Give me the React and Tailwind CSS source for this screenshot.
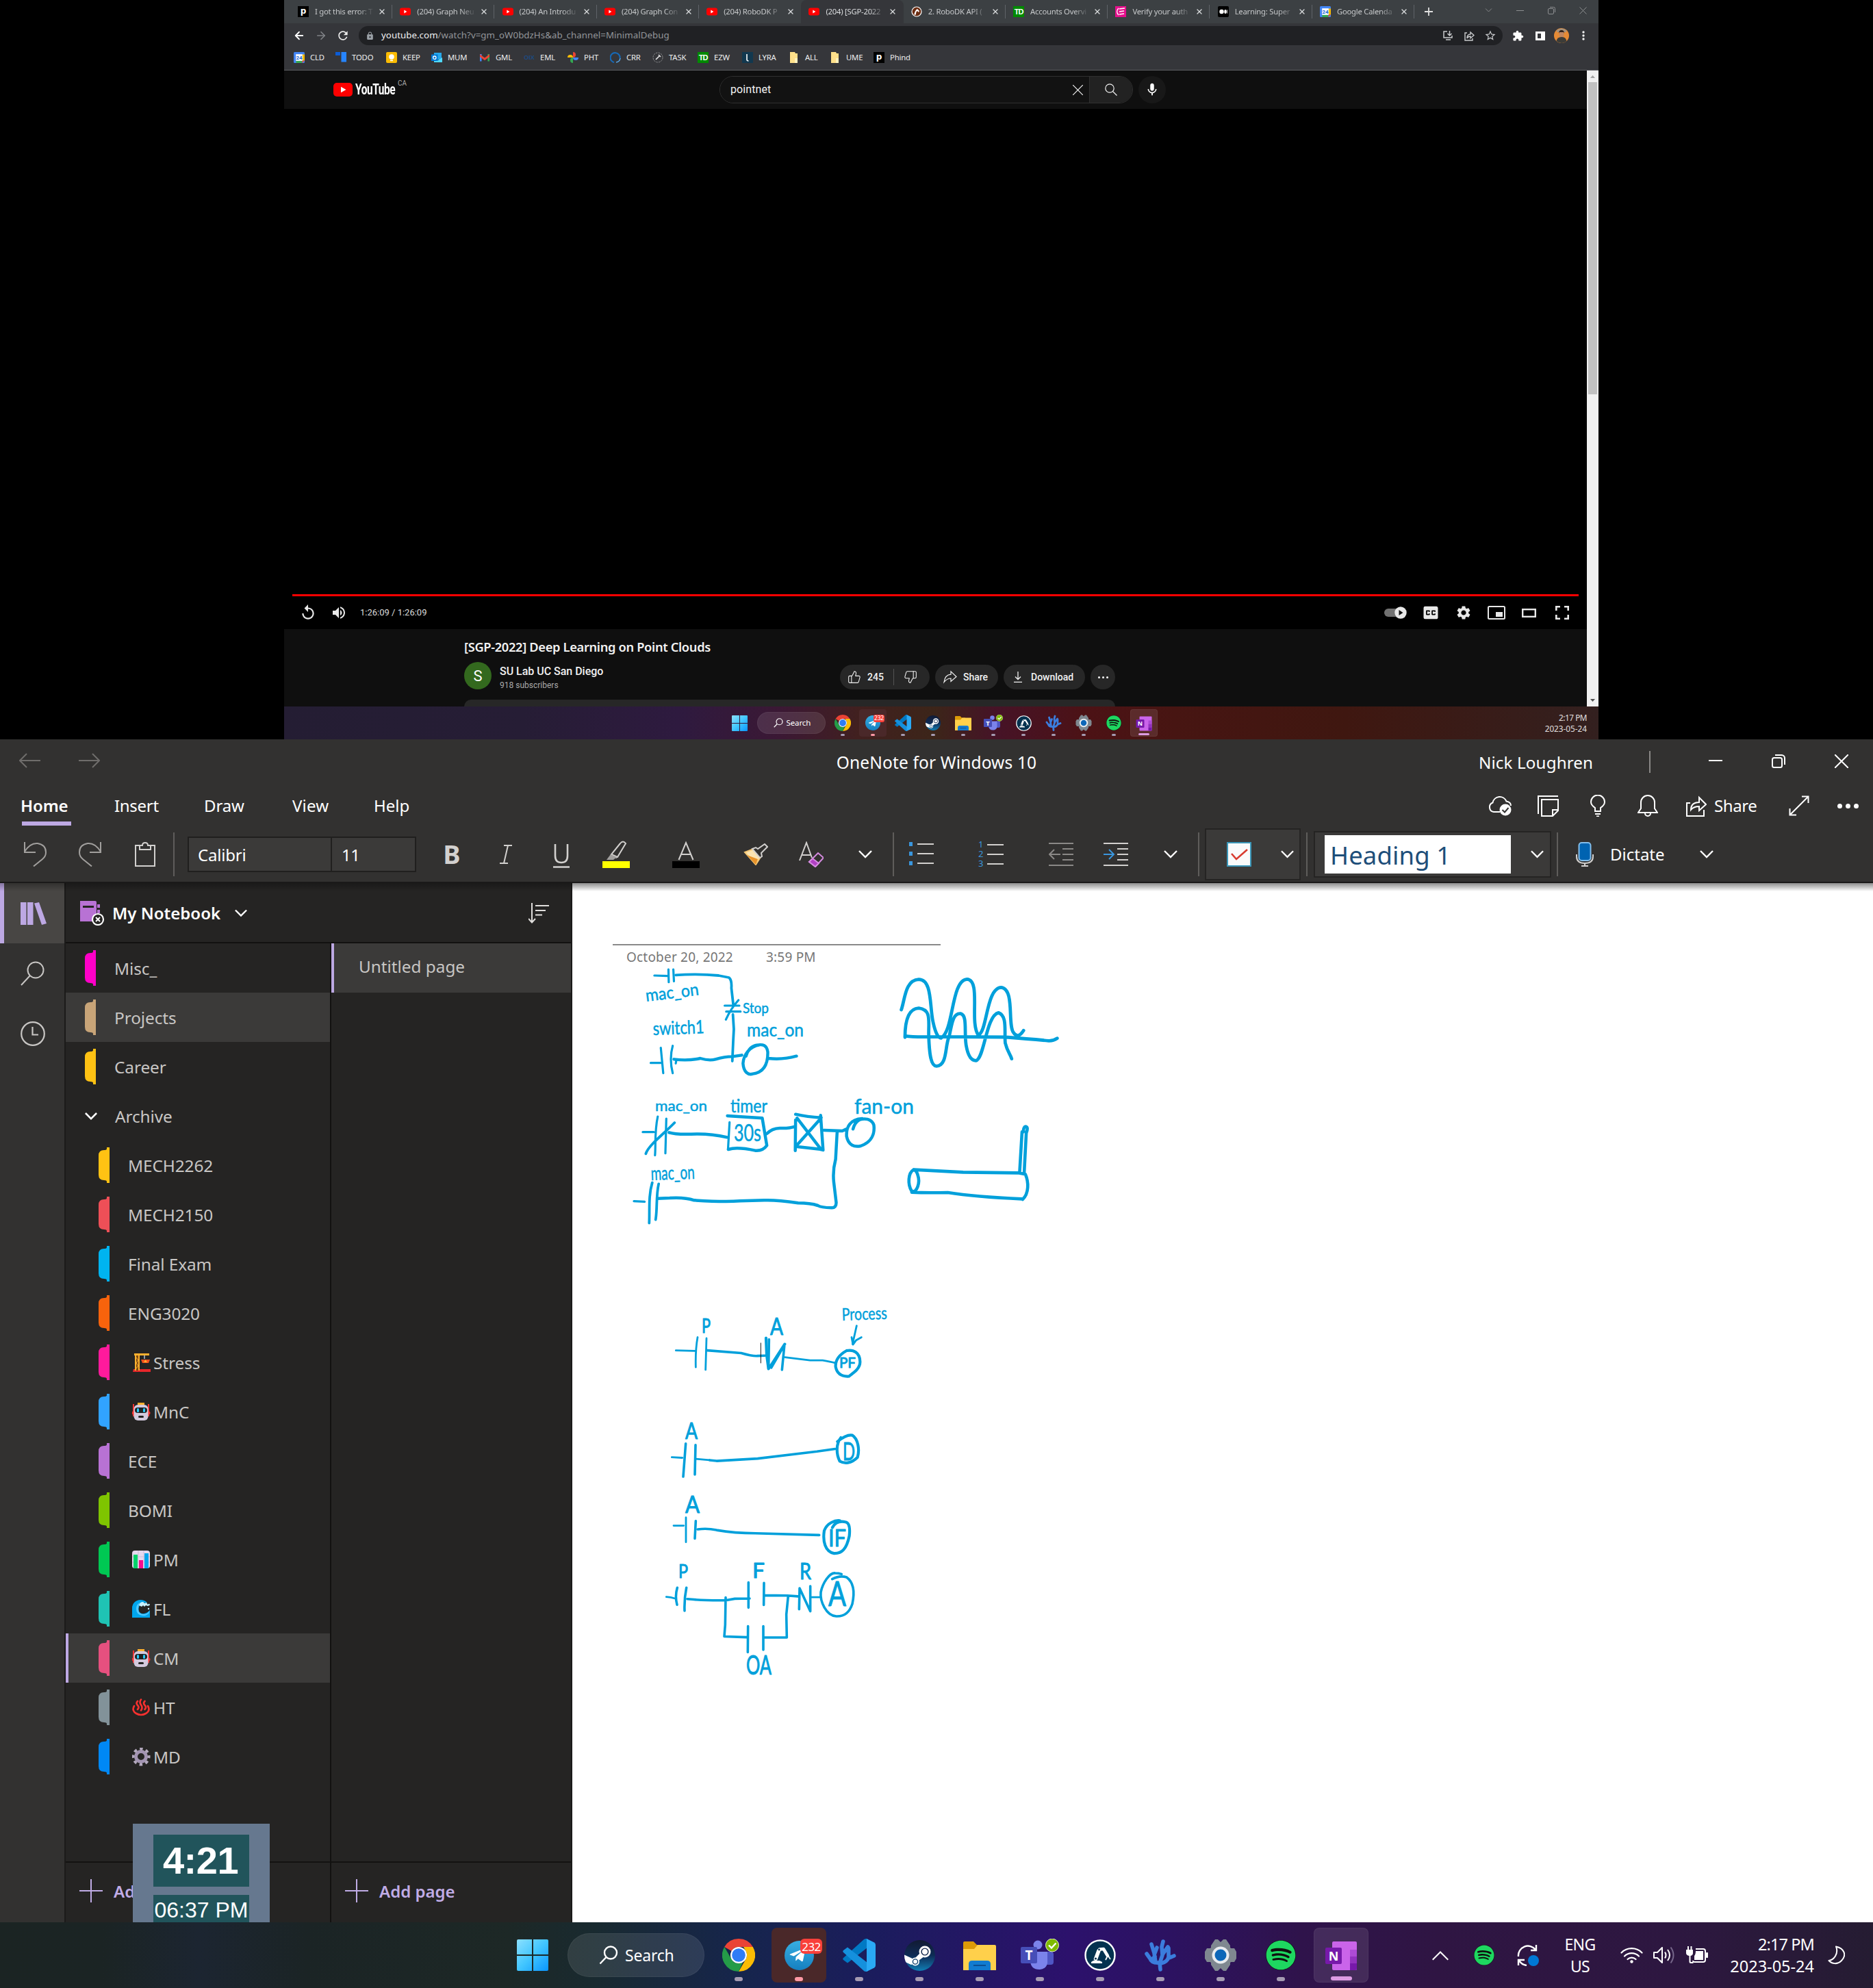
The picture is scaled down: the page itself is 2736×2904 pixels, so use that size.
import React from "react";
import { FaSpotify, FaTelegramPlane } from "react-icons/fa";
import { MdReplay, MdVolumeUp, MdSettings, MdClosedCaption, MdExtension, MdLock, MdMic, MdRefresh, MdStarBorder } from "react-icons/md";
import { ArrowLeft, ArrowRight, ThumbsUp, ThumbsDown, X } from "lucide-react";

/* ---------- shared pieces ---------- */

function Chevron({ className = "", up = false, w = 2 }) {
  return (
    <svg className={className} viewBox="0 0 20 12" fill="none" stroke="currentColor" strokeWidth={w}>
      <path d={up ? "M1 11 10 2l9 9" : "M1 1l9 9 9-9"} />
    </svg>
  );
}

function Favicon({ kind }) {
  const c = "block size-4 shrink-0";
  switch (kind) {
    case "phind":
      return <span className={c + " bg-black text-center font-['DejaVu_Sans'] text-[12px] font-bold leading-[14px] text-white"}>p</span>;
    case "yt":
      return (
        <svg className={c} viewBox="0 0 16 16"><rect x="0" y="2.5" width="16" height="11" rx="3" fill="#f00" /><path d="M6.3 5.6v4.8L10.4 8z" fill="#fff" /></svg>
      );
    case "robo":
      return (
        <svg className={c} viewBox="0 0 16 16"><circle cx="8" cy="8" r="7" fill="#6b2d12" stroke="#fff" strokeWidth="1.2" /><path d="M4 12.500c1-1 1-6 5-8.500l3 3-1 2-2-2c-2 1-2 3-2 5.500z" fill="#fff" /></svg>
      );
    case "td":
      return <span className={c + " bg-[#008a00] text-center font-['Liberation_Sans'] text-[11px] font-bold leading-4 tracking-[-1px] text-white"}>TD</span>;
    case "pink":
      return (
        <svg className={c} viewBox="0 0 16 16"><rect width="16" height="16" fill="#e5108c" /><path d="M5 3C2 6 2 10 5 13M6 4l8-1M6 8l7-1M6 12l7-1" stroke="#fff" strokeWidth="1.5" fill="none" /></svg>
      );
    case "medium":
      return (
        <svg className={c} viewBox="0 0 16 16"><rect width="16" height="16" rx="2" fill="#000" /><circle cx="5.5" cy="8" r="3.2" fill="#fff" /><ellipse cx="11" cy="8" rx="1.7" ry="3" fill="#fff" /><rect x="13.3" y="5.4" width=".8" height="5.2" fill="#fff" /></svg>
      );
    case "cal":
      return (
        <svg className={c} viewBox="0 0 16 16"><rect width="16" height="16" rx="1.5" fill="#4285f4" /><path d="M12.5 3.5H16v9h-3.5z" fill="#fbbc04" /><path d="M3.5 12.5h9V16h-9z" fill="#34a853" /><path d="M12.5 12.5H16L12.5 16z" fill="#ea4335" /><rect x="3.2" y="3.2" width="9.6" height="9.6" fill="#fff" /><text x="8" y="11" textAnchor="middle" fontSize="8" fontFamily="Roboto" fontWeight="700" fill="#1967d2">24</text></svg>
      );
    case "todo":
      return (
        <svg className={c} viewBox="0 0 16 16"><path d="M0 0h7v5H0z" fill="#0b5cd6" /><path d="M8.5 0H16v14.5H8.5z" fill="#2684ff" /></svg>
      );
    case "keep":
      return (
        <svg className={c} viewBox="0 0 16 16"><rect x="0" y="0" width="16" height="16" rx="2" fill="#fbbc04" /><circle cx="8" cy="7" r="3.8" fill="#fff" /><rect x="6" y="11.6" width="4" height="1.6" fill="#fff" /></svg>
      );
    case "outlook":
      return (
        <svg className={c} viewBox="0 0 16 16"><rect x="4" y="1" width="11" height="10" fill="#28a8ea" /><path d="M4 8l6 4 6-4v7H4z" fill="#50d9ff" /><rect x="0" y="3.5" width="9.5" height="9.5" fill="#0078d4" /><circle cx="4.8" cy="8.2" r="2.2" fill="none" stroke="#fff" strokeWidth="1.3" /></svg>
      );
    case "gmail":
      return (
        <svg className={c} viewBox="0 0 16 16"><path d="M1 3h2.6v10.5H1z" fill="#4285f4" /><path d="M12.4 3H15v10.5h-2.600z" fill="#34a853" /><path d="M1 3.200 8 8.500l7-5.300V7L8 12.300 1 7z" fill="#ea4335" /></svg>
      );
    case "eml":
      return <span className={c + " text-center font-['Liberation_Sans'] text-[9px] font-bold leading-4 text-[#1d4a80]"}>OIX</span>;
    case "photos":
      return (
        <svg className={c} viewBox="0 0 16 16"><path d="M8 8V0a4 4 0 0 1 0 8z" fill="#ea4335" /><path d="M8 8H0a4 4 0 0 1 8 0z" fill="#fbbc04" /><path d="M8 8v8a4 4 0 0 1 0-8z" fill="#34a853" /><path d="M8 8h8a4 4 0 0 1-8 0z" fill="#4285f4" /></svg>
      );
    case "ring":
      return (
        <svg className={c} viewBox="0 0 16 16" fill="none"><path d="M6 15A7 7 0 1 1 14.500 9" stroke="#1769b5" strokeWidth="2.200" /><path d="M9 15a7 7 0 0 0 6-6" stroke="#57a8e8" strokeWidth="1.500" /></svg>
      );
    case "task":
      return (
        <svg className={c} viewBox="0 0 16 16" fill="none"><circle cx="8" cy="8" r="7" stroke="#8b8c8e" strokeDasharray="2.500 1.200" /><path d="M5 11l5-5M9 4l3 3" stroke="#e8e8e8" strokeWidth="1.600" /></svg>
      );
    case "lyra":
      return (
        <svg className={c} viewBox="0 0 16 16"><rect width="16" height="16" fill="#12384f" /><path d="M7 3v8q0 2 2.500 2" stroke="#fff" strokeWidth="1.600" fill="none" /></svg>
      );
    default:
      return (
        <svg className={c} viewBox="0 0 16 16"><path d="M2 0h7l1 2h3v14H2z" fill="#ffe08a" /><path d="M9 9h4v7H9z" fill="#fff1bd" /></svg>
      );
  }
}

/* ---------- browser ---------- */

const TABS = [
  ["phind", "I got this error: T"],
  ["yt", "(204) Graph Neu"],
  ["yt", "(204) An Introdu"],
  ["yt", "(204) Graph Con"],
  ["yt", "(204) RoboDK P"],
  ["yt", "(204) [SGP-2022"],
  ["robo", "2. RoboDK API ("],
  ["td", "Accounts Overvi"],
  ["pink", "Verify your auth"],
  ["medium", "Learning: Super"],
  ["cal", "Google Calenda"],
];

const MARKS = [
  ["cal", "CLD", "w-[61px]"],
  ["todo", "TODO", "w-[74px]"],
  ["keep", "KEEP", "w-[66px]"],
  ["outlook", "MUM", "w-[70px]"],
  ["gmail", "GML", "w-[65px]"],
  ["eml", "EML", "w-[64px]"],
  ["photos", "PHT", "w-[62px]"],
  ["ring", "CRR", "w-[62px]"],
  ["task", "TASK", "w-[66px]"],
  ["td", "EZW", "w-[65px]"],
  ["lyra", "LYRA", "w-[68px]"],
  ["folder", "ALL", "w-[60px]"],
  ["folder", "UME", "w-[64px]"],
  ["phind", "Phind", "w-[64px]"],
];

function TabStrip() {
  return (
    <div className="flex h-[34px] items-center bg-[#3c4043] pl-[9px] text-[11.3px] text-[#c6c8ca]">
      {TABS.map(([icon, title], i) => (
        <div
          key={i}
          className={
            "flex h-full w-[149.3px] shrink-0 items-center pl-[11px] " + (i === 5 ? "rounded-t-lg bg-[#35363a] text-[#dcdee0]" : "")
          }
        >
          <Favicon kind={icon} />
          <span className="ml-[9px] w-[88px] shrink-0 overflow-hidden whitespace-nowrap tracking-[-0.25px] [mask-image:linear-gradient(to_right,black_72%,transparent_98%)]">
            {title}
          </span>
          <X className="ml-[4px] size-[12px] shrink-0 text-[#dadcde]" strokeWidth={2.6} />
          <span className={"ml-[8px] h-5 w-px shrink-0 " + (i === 5 || i === 4 ? "" : "bg-[#5f6368]")} />
        </div>
      ))}
      <svg className="ml-[15px] size-3 text-[#e0e0e0]" viewBox="0 0 12 12" stroke="currentColor" strokeWidth="1.800"><path d="M6 0v12M0 6h12" /></svg>
      <div className="mb-1 ml-auto mr-[17px] flex items-center gap-[35px] text-[#8c8e90]">
        <Chevron className="h-[6px] w-[11px]" w={1.8} />
        <span className="h-px w-[11px] bg-current" />
        <svg className="size-[11px]" viewBox="0 0 11 11" fill="none" stroke="currentColor"><rect x=".5" y="2.500" width="8" height="8" rx="1.500" /><path d="M3 .5h5.500a2 2 0 0 1 2 2V8" /></svg>
        <svg className="size-[11px]" viewBox="0 0 11 11" stroke="currentColor"><path d="M.5.5l10 10M10.500.5l-10 10" /></svg>
      </div>
    </div>
  );
}

function AddressBar() {
  return (
    <div className="flex h-9 items-center bg-[#35363a] text-[#c9cbcd]">
      <ArrowLeft className="ml-[13px] size-[18px] text-white" strokeWidth={2.4} />
      <ArrowRight className="ml-[14px] size-[18px] text-[#808387]" strokeWidth={2.2} />
      <MdRefresh className="ml-[13px] size-[20px] text-[#ececec]" />
      <div className="ml-[13px] flex h-7 w-[1671px] items-center rounded-full bg-[#202124]">
        <MdLock className="ml-[10px] size-[13px] text-[#9aa0a6]" />
        <span className="ml-[10px] whitespace-nowrap text-[13.3px] tracking-[0.04px] text-[#93969a]">
          <span className="text-[#eff0f1]">youtube.com</span>/watch?v=gm_oW0bdzHs&amp;ab_channel=MinimalDebug
        </span>
        <svg className="ml-auto size-[14px]" viewBox="0 0 14 14" fill="none" stroke="currentColor" strokeWidth="1.500"><path d="M6 1H1v9h12V7M4 13h7M9.500 0v6.500M6.500 4l3 3 3-3" /></svg>
        <svg className="ml-[17px] size-[15px]" viewBox="0 0 15 15" fill="none" stroke="currentColor" strokeWidth="1.400"><path d="M4 3H1v11h11v-3M4 11c0-4 2-6 5-6V2l5 4.500-5 4.300V8C7 8 5 9 4 11z" /></svg>
        <MdStarBorder className="ml-[14px] mr-[9px] size-[18px]" />
      </div>
      <MdExtension className="ml-[14px] size-[17px] text-white" />
      <span className="ml-[17px] block h-[13px] w-[14px] border-[3px] border-white bg-[#35363a] [border-right-width:6px]" />
      <svg className="ml-[13px] size-[22px]" viewBox="0 0 22 22"><circle cx="11" cy="11" r="11" fill="#e58a35" /><path d="M4 3a11 11 0 0 1 14 0v3H4z" fill="#a5907a" /><ellipse cx="11" cy="9" rx="3.600" ry="5" fill="#c08660" /><path d="M7 8q0-5 4-5t4 5l-1-2H8z" fill="#30221c" /><path d="M3.500 19q1-6 7.500-6t7.500 6A11 11 0 0 1 3.500 19z" fill="#3c3c38" /></svg>
      <svg className="ml-[19px] h-[14px] w-[4px]" viewBox="0 0 4 14" fill="#f0f0f0"><circle cx="2" cy="2" r="1.700" /><circle cx="2" cy="7" r="1.700" /><circle cx="2" cy="12" r="1.700" /></svg>
    </div>
  );
}

function YouTubeHeader() {
  return (
    <div className="flex h-14 items-center bg-[#0f0f0f]">
      <svg className="ml-[72px] h-5 w-7" viewBox="0 0 28 20"><rect width="28" height="20" rx="5" fill="#f00" /><path d="M11 5.700v8.600L18.500 10z" fill="#fff" /></svg>
      <span className="ml-[4px] block w-[60px] origin-left scale-x-[0.72] whitespace-nowrap font-['Roboto'] text-[21.5px] font-bold leading-none tracking-[-0.6px] text-white">YouTube</span>
      <span className="ml-[2px] block w-4 self-start pt-[14px] font-['Roboto'] text-[10px] leading-none text-[#aaa]">CA</span>
      <div className="ml-[454px] flex h-10 w-[604px] overflow-hidden rounded-full border border-[#303030] font-['Roboto']">
        <div className="flex w-[540px] items-center border-r border-[#303030] bg-[#121212]">
          <span className="ml-[15px] text-[16px] tracking-[0.1px] text-[#f1f1f1]">pointnet</span>
          <svg className="ml-auto mr-[9px] size-[15px]" viewBox="0 0 15 15" stroke="#f1f1f1" strokeWidth="1.200"><path d="M0 0l15 15M15 0 0 15" /></svg>
        </div>
        <div className="flex grow items-center justify-center bg-[#222]">
          <svg className="size-[18px]" viewBox="0 0 18 18" fill="none" stroke="#f1f1f1" strokeWidth="1.200"><circle cx="7" cy="7" r="6.200" /><path d="M11.500 11.500l6 6" /></svg>
        </div>
      </div>
      <div className="ml-2 flex size-10 items-center justify-center rounded-full bg-[#181818]">
        <MdMic className="size-[22px] text-white" />
      </div>
    </div>
  );
}

function Pill({ className, children }) {
  return <div className={"flex h-9 items-center rounded-full bg-[#272727] text-[14px] font-medium text-[#f1f1f1] " + className}>{children}</div>;
}

function Player() {
  return (
    <div className="flex h-[760px] flex-col justify-end bg-black pl-3 pr-3">
      <div className="h-[3px] bg-[#f00]" />
      <div className="flex h-12 items-center text-[#e8e8e8]">
        <MdReplay className="ml-[10px] size-[26px]" />
        <MdVolumeUp className="ml-[20px] size-[24px]" />
        <span className="ml-[19px] font-['Roboto'] text-[13px] tracking-[0px] text-[#ddd]">1:26:09 / 1:26:09</span>
        <svg className="ml-auto h-[18px] w-[33px]" viewBox="0 0 33 18"><rect x="0" y="3" width="28" height="12" rx="6" fill="#717171" /><circle cx="24" cy="9" r="8.700" fill="#e8e8e8" /><path d="M21.500 5v8l6-4z" fill="#111" /></svg>
        <MdClosedCaption className="ml-[21px] size-[28px]" />
        <MdSettings className="ml-[22px] size-[24px]" />
        <svg className="ml-[23px] h-[20px] w-[26px]" viewBox="0 0 26 20"><rect x="1" y="1" width="24" height="18" rx="1.500" fill="none" stroke="currentColor" strokeWidth="2" /><rect x="12" y="9" width="10" height="7" fill="currentColor" /></svg>
        <svg className="ml-[24px] h-[13px] w-[21px]" viewBox="0 0 21 13"><rect x="1.200" y="1.200" width="18.600" height="10.600" fill="none" stroke="currentColor" strokeWidth="2.400" /></svg>
        <svg className="ml-[28px] mr-[14px] size-[20px]" viewBox="0 0 20 20" fill="none" stroke="currentColor" strokeWidth="2.600"><path d="M7 1.300H1.300V7M13 1.300h5.700V7M7 18.700H1.300V13M13 18.700h5.700V13" /></svg>
      </div>
    </div>
  );
}

function VideoDetails() {
  return (
    <div className="flex h-[113px] flex-col bg-[#0f0f0f] pl-[263px] font-['Roboto']">
      <h1 className="mt-[13px] h-[26px] whitespace-nowrap font-['Noto_Sans'] text-[18.3px] font-semibold leading-[26px] tracking-[-0.34px] text-[#f1f1f1]">
        [SGP-2022] Deep Learning on Point Clouds
      </h1>
      <div className="mt-[9px] flex h-10 w-[951px] items-center">
        <div className="flex size-10 items-center justify-center rounded-full bg-[#33691e] text-[22px] text-white">S</div>
        <div className="ml-3 w-[497px] pt-[5px]">
          <div className="text-[16px] font-medium leading-[22px] tracking-[-0.02px] text-[#f1f1f1]">SU Lab UC San Diego</div>
          <div className="text-[12px] leading-[18px] text-[#aaa]">918 subscribers</div>
        </div>
        <Pill className="mt-1 w-[131px]">
          <ThumbsUp className="ml-[11px] size-[20px]" strokeWidth={1.3} />
          <span className="ml-[9px]">245</span>
          <span className="ml-[14px] h-6 w-px bg-[#535353]" />
          <ThumbsDown className="ml-[14px] size-[20px]" strokeWidth={1.3} />
        </Pill>
        <Pill className="ml-2 mt-1 w-[92px]">
          <svg className="ml-[12px] size-[20px]" viewBox="0 0 20 20" fill="none" stroke="currentColor" strokeWidth="1.200"><path d="M1 17.500C2 10 6 6.500 11 6.200V1.800L19 9.500l-8 7v-4.500C7 12 4 13.500 1 17.500z" /></svg>
          <span className="ml-[9px]">Share</span>
        </Pill>
        <Pill className="ml-2 mt-1 w-[119px]">
          <svg className="ml-[14px] h-[16px] w-[14px]" viewBox="0 0 14 16" fill="none" stroke="currentColor" strokeWidth="1.300"><path d="M7 0v11M3 7.500l4 4 4-4M1 15.300h12" /></svg>
          <span className="ml-[12px]">Download</span>
        </Pill>
        <Pill className="ml-[8px] mt-1 w-9 justify-center gap-[3px]">
          <i className="size-[3px] rounded-full bg-white" />
          <i className="size-[3px] rounded-full bg-white" />
          <i className="size-[3px] rounded-full bg-white" />
        </Pill>
      </div>
      <div className="mt-auto h-[10px] w-[951px] rounded-t-xl bg-[#272727]" />
    </div>
  );
}

function Browser() {
  return (
    <div className="flex h-[1032px] flex-col">
      <TabStrip />
      <AddressBar />
      <div className="flex h-[33px] items-center border-b border-[#5c5d61] bg-[#35363a] pb-1 pl-[14px] text-[11.3px] text-[#eceded]">
        {MARKS.map(([icon, label, w]) => (
          <div key={label} className={"flex shrink-0 items-center gap-2 whitespace-nowrap " + w}>
            <Favicon kind={icon} />
            <span className="tracking-[-0.15px]">{label}</span>
          </div>
        ))}
      </div>
      <div className="flex">
        <div className="w-[1903px]">
          <YouTubeHeader />
          <Player />
          <VideoDetails />
        </div>
        <div className="flex w-[17px] flex-col items-center bg-[#f1f1f1]">
          <svg className="mt-[7px] h-[4px] w-[7px]" viewBox="0 0 7 4"><path d="M0 4h7L3.500 0z" fill="#a3a3a3" /></svg>
          <div className="mt-[6px] h-[456px] w-[13px] bg-[#c1c1c1]" />
          <svg className="mb-[7px] mt-auto h-[4px] w-[7px]" viewBox="0 0 7 4"><path d="M0 0h7L3.500 4z" fill="#505050" /></svg>
        </div>
      </div>
    </div>
  );
}

/* ---------- taskbar ---------- */

function WindowsLogo() {
  return (
    <svg className="size-[46px] shrink-0" viewBox="0 0 46 46">
      <defs><linearGradient id="win" x1="0" y1="0" x2="1" y2="1"><stop offset="0" stopColor="#8be0ff" /><stop offset=".5" stopColor="#42c6ff" /><stop offset="1" stopColor="#0a95ff" /></linearGradient></defs>
      <path d="M2 0h20v22H0V2a2 2 0 0 1 2-2zM24 0h20a2 2 0 0 1 2 2v20H24zM0 24h22v22H2a2 2 0 0 1-2-2zM24 24h22v20a2 2 0 0 1-2 2H24z" fill="url(#win)" />
    </svg>
  );
}

function ChromeIcon() {
  return (
    <svg className="size-12" viewBox="0 0 48 48">
      <path d="M24 0a24 24 0 0 1 20.800 12H24a12 12 0 0 0-10.400 6L3.200 12A24 24 0 0 1 24 0z" fill="#ea4335" />
      <path d="M44.800 12A24 24 0 0 1 24 48l10.400-18A12 12 0 0 0 34.400 18L31 12z" fill="#fbbc04" />
      <path d="M3.200 12 13.600 30A12 12 0 0 0 24 36l6-1.500L24 48A24 24 0 0 1 3.200 12z" fill="#249b48" />
      <circle cx="24" cy="24" r="12" fill="#fff" /><circle cx="24" cy="24" r="9.800" fill="#2f7cf6" />
    </svg>
  );
}

function TelegramIcon() {
  return (
    <div className="relative flex size-12 items-center justify-center">
      <span className="flex size-[43px] items-center justify-center rounded-full bg-gradient-to-b from-[#37aee2] to-[#1580c0]">
        <FaTelegramPlane className="mr-1 size-[26px] text-white" />
      </span>
      <span className="absolute -right-[10px] top-0 flex h-[22px] w-8 items-center justify-center rounded-md bg-[#f9403a] font-['Noto_Sans'] text-[17px] leading-none tracking-[-0.5px] text-white">232</span>
    </div>
  );
}

function CodeIcon() {
  return (
    <svg className="size-12" viewBox="0 0 48 48">
      <path d="M36 0v13L7 35.500l-6-4.500q-1.500-1.500 0-3L31 1q2-1.500 5-1z" fill="#0079c4" />
      <path d="M36 48V35L7 12.500 1 17q-1.500 1.500 0 3l30 27q2 1.500 5 1z" fill="#1590dd" />
      <path d="M35 0 46 5.500Q48 6.500 48 9v30q0 2.500-2 3.500L35 48z" fill="#2aa9f5" />
    </svg>
  );
}

function SteamIcon() {
  return (
    <span className="flex size-[45px] items-center justify-center overflow-hidden rounded-full bg-gradient-to-b from-[#111a33] via-[#0d2c56] to-[#0f7fb5]">
      <svg className="size-[45px]" viewBox="0 0 45 45"><path d="M-1 21 14 28 24 18 29 24 18 32 10 36-1 31z" fill="#fff" /><circle cx="30" cy="17" r="8.500" fill="#fff" /><circle cx="30" cy="17" r="5.600" fill="#10254a" /><circle cx="30" cy="17" r="4.200" fill="#fff" /><circle cx="16" cy="31.500" r="6" fill="#fff" /><circle cx="16" cy="31.500" r="3.600" fill="none" stroke="#10406c" strokeWidth="1.400" /></svg>
    </span>
  );
}

function FilesIcon() {
  return (
    <svg className="size-12" viewBox="0 0 48 48">
      <path d="M0 6q0-2 2-2h13l5 5h10v12H0z" fill="#dc9a08" />
      <path d="M0 15h16l5-6h25q2 0 2 2v35H0z" fill="#ffd04b" />
      <path d="M8 46V37q0-5 5-5h22q5 0 5 5v9z" fill="#127bd0" /><rect x="15" y="38" width="18" height="2" fill="#0b4f93" />
    </svg>
  );
}

function TeamsIcon() {
  return (
    <svg className="h-12 w-[56px]" viewBox="0 0 56 48">
      <rect x="34" y="19" width="14" height="19" rx="4" fill="#4f56c4" />
      <circle cx="25" cy="9" r="6.500" fill="#7b83eb" />
      <path d="M14 19h25v16a11 11 0 0 1-12 10q-12 0-13-12z" fill="#7b83eb" />
      <rect x="0" y="12" width="24" height="24" rx="2" fill="#464eb8" />
      <text x="12" y="31" fontFamily="Open Sans" fontSize="19" fontWeight="700" fill="#fff" textAnchor="middle">T</text>
      <circle cx="46" cy="9.500" r="9.500" fill="#7fba00" stroke="#e6f3c8" strokeWidth="1" /><path d="M41 9.500l4 4 6.500-7" fill="none" stroke="#fff" strokeWidth="2.400" />
    </svg>
  );
}

function RobotArmIcon() {
  return (
    <svg className="size-[46px]" viewBox="0 0 46 46">
      <circle cx="23" cy="23" r="21.500" fill="#03324f" stroke="#fff" strokeWidth="2.400" />
      <path d="M10 35v-2l3-2h9l4 2v2z" fill="#fff" />
      <path d="M16.500 28.500 21 16.500" stroke="#fff" strokeWidth="5.500" strokeLinecap="round" />
      <path d="M22 14.500 28 14l6 10" fill="none" stroke="#fff" strokeWidth="4.500" strokeLinecap="round" strokeLinejoin="round" />
      <path d="M33 26l-2 4M35.500 25l2.500 4" stroke="#fff" strokeWidth="1.800" />
      <circle cx="16.500" cy="28" r="1.600" fill="#03324f" /><circle cx="21.500" cy="15" r="1.400" fill="#03324f" />
    </svg>
  );
}

function CoralIcon() {
  return (
    <svg className="size-12" viewBox="0 0 48 48" fill="none" stroke="#3b7ddd" strokeWidth="5.600" strokeLinecap="round" strokeLinejoin="round">
      <path d="M24 45l-1-10Q11 36 9 29L4 22M11 31l5-5M17 34 15 21 11 8M16 21l3-8M23 36l4-12-1-12 2-8M27 23l8-11M25 36q9-2 11-9V14M37 28l7-3" />
    </svg>
  );
}

function GearIcon() {
  return (
    <svg className="size-12" viewBox="0 0 48 48">
      <g fill="#7f8890"><circle cx="24" cy="24" r="18" /><path d="M16 1h4l4 4 4-4h4l6 9v28l-6 9h-4l-4-4-4 4h-4l-6-9V10z" /><path d="M1 19l3-5h40l3 5v10l-3 5H4l-3-5z" /></g>
      <circle cx="24" cy="24" r="12.500" fill="#e9ecef" /><circle cx="24" cy="24" r="8.500" fill="#0d67b8" />
    </svg>
  );
}

function SpotifyIcon({ className }) {
  return (
    <span className={"flex items-center justify-center rounded-full bg-[#101010] " + className}>
      <FaSpotify className="size-full text-[#1ed760]" />
    </span>
  );
}

function OneNoteIcon() {
  return (
    <svg className="size-12" viewBox="0 0 48 48">
      <rect x="11" y="3" width="36" height="42" rx="2" fill="#ca64ea" />
      <path d="M37 15h10v10H37z" fill="#ae4bd5" /><path d="M37 25h10v10H37z" fill="#9332bf" /><path d="M37 35h10v8q0 2-2 2h-8z" fill="#7719aa" />
      <rect x="1" y="12" width="24" height="24" rx="2" fill="#7719aa" />
      <text x="13" y="30.500" fontFamily="Open Sans" fontSize="18" fontWeight="700" fill="#fff" textAnchor="middle">N</text>
    </svg>
  );
}

const APPS = [
  <ChromeIcon />, <TelegramIcon />, <CodeIcon />, <SteamIcon />, <FilesIcon />, <TeamsIcon />,
  <RobotArmIcon />, <CoralIcon />, <GearIcon />, <SpotifyIcon className="size-[44px]" />, <OneNoteIcon />,
];

function TaskbarApps() {
  return (
    <>
      <WindowsLogo />
      <div className="ml-[28px] flex h-16 w-[200px] shrink-0 items-center rounded-full border border-white/5 bg-white/10 pl-[45px] text-white">
        <svg className="size-[28px]" viewBox="0 0 28 28" fill="none" stroke="currentColor" strokeWidth="2.400"><circle cx="17" cy="10.500" r="9" /><path d="M10.500 17 1.500 26.500" /></svg>
        <span className="ml-[10px] text-[23px] leading-none tracking-[-0.2px]">Search</span>
      </div>
      <div className="ml-[6px] flex">
        {APPS.map((icon, i) => (
          <div key={i} className="flex w-[88px] justify-center">
            <div
              className={
                "flex h-20 w-20 flex-col items-center justify-between rounded-lg pb-[2px] pt-[16px] " +
                (i === 1 ? "bg-[#4a2829]" : i === 10 ? "border border-white/5 bg-white/10" : "")
              }
            >
              <div className="flex h-12 items-center justify-center">{icon}</div>
              <span className={"h-[6px] rounded-full " + (i === 10 ? "w-[31px] bg-[#dc9be3]" : i === 1 ? "w-3 bg-[#ff99a5]" : "w-3 bg-[#a59bb2]")} />
            </div>
          </div>
        ))}
      </div>
    </>
  );
}

function Clock({ className }) {
  return (
    <div className={"whitespace-nowrap text-right text-[23.5px] leading-8 text-white " + className}>
      <div className="tracking-[-0.9px]">2:17 PM</div>
      <div>2023-05-24</div>
    </div>
  );
}

function MainTaskbar() {
  return (
    <div className="flex h-24 items-center bg-[linear-gradient(90deg,#1b2423_0px,#1b2424_150px,#1c2531_290px,#1b2425_450px,#1d2826_740px,#192a30_870px,#16254c_1080px,#1b1c5d_1280px,#2c116c_1560px,#2c1261_1710px,#2f134b_1900px,#2f1543_2100px,#2d1740_2450px,#251c32_2736px)] pl-[755px]">
      <TaskbarApps />
      <Chevron up className="ml-[88px] h-[15px] w-[26px] text-white" w={1.6} />
      <SpotifyIcon className="ml-[36px] size-[30px]" />
      <svg className="ml-[33px] size-8" viewBox="0 0 32 32" fill="none" stroke="#fff" strokeWidth="2.400"><path d="M2 18A14 14 0 0 1 27 8M28 1v8h-8M2 31v-8h9M3 24q4 6 11 7" /><circle cx="24" cy="24" r="8" fill="#0078d4" stroke="none" /></svg>
      <div className="ml-[37px] w-[46px] text-center text-[23px] leading-8 tracking-[-0.6px] text-white"><div>ENG</div><div>US</div></div>
      <svg className="ml-[36px] h-[26px] w-[33px]" viewBox="0 0 33 26" fill="none" stroke="#fff" strokeWidth="2.200" strokeLinecap="round"><path d="M1.500 9.500a21 21 0 0 1 30 0M6 14.500a15 15 0 0 1 21 0M10.500 19a9 9 0 0 1 12 0" /><circle cx="16.500" cy="22.500" r="2.200" fill="#fff" stroke="none" /></svg>
      <svg className="ml-[15px] h-[26px] w-[32px]" viewBox="0 0 32 26" fill="none" stroke="#fff" strokeWidth="2"><path d="M1 9h5l7-7v22l-7-7H1z" strokeLinejoin="round" /><path d="M17 8.500q3 4.500 0 9M21 5q6 8 0 16" /><path d="M25.500 1.500q8 11.500 0 23" stroke="#76668a" /></svg>
      <svg className="ml-[16px] h-[26px] w-[32px]" viewBox="0 0 32 26"><path d="M14 4h11q3 0 3 3v13q0 3-3 3H12q-2 0-2-2" fill="none" stroke="#fff" strokeWidth="2" /><path d="M14 7h11v13H12v-6q2-2 2-7z" fill="#fff" /><rect x="29" y="9" width="3" height="8" rx="1" fill="#fff" /><path d="M0 5h10v5q0 3-3.500 4v8q0 1 1 1h3v2H7q-2.500 0-2.500-2.500V14Q0 13 0 10zM2 0h2v5H2zM6.500 0h2v5h-2z" fill="#fff" /></svg>
      <Clock className="ml-[31px] w-[124px]" />
      <svg className="ml-[20px] h-[28px] w-[25px]" viewBox="0 0 25 28" fill="none" stroke="#fff" strokeWidth="2"><path d="M12 1.500C24 4 28 14 20 22 14 28 6 27 1.500 22 9 21 16 12 12 1.500z" strokeLinejoin="round" /></svg>
    </div>
  );
}

function SecondTaskbar() {
  return (
    <div className="flex h-24 w-[3840px] items-center bg-[linear-gradient(90deg,#241d33_0px,#261d35_700px,#2e1a3f_1150px,#3b1834_1450px,#41201f_1680px,#3c2519_1900px,#461327_2080px,#4c1215_2350px,#471512_2600px,#3f1710_3100px,#33201f_3840px)] pl-[1308px] [zoom:0.5]">
      <TaskbarApps />
      <Clock className="ml-auto mr-[34px] text-white/85" />
    </div>
  );
}

/* ---------- OneNote ---------- */

function TitleBar() {
  return (
    <div className="grid h-[66px] grid-cols-3 items-center">
      <div className="flex items-center text-[#6f6d6b]">
        <svg className="-mt-1 ml-[28px] h-[22px] w-[31px]" viewBox="0 0 31 22" fill="none" stroke="currentColor" strokeWidth="2"><path d="M1 11h30M11 1 1 11l10 10" /></svg>
        <svg className="-mt-1 ml-[56px] h-[22px] w-[31px]" viewBox="0 0 31 22" fill="none" stroke="currentColor" strokeWidth="2"><path d="M0 11h30M20 1l10 10-10 10" /></svg>
      </div>
      <div className="pt-[2px] text-center text-[24.5px] tracking-[0.14px]">OneNote for Windows 10</div>
      <div className="flex items-center justify-end">
        <span className="w-[166px] whitespace-nowrap pt-[2px] text-[24.2px] tracking-[0.12px]">Nick Loughren</span>
        <span className="ml-[83px] h-8 w-[2px] bg-[#8a8886]" />
        <span className="-mt-1 ml-[85px] h-[2px] w-[20px] bg-white" />
        <svg className="-mt-[2px] ml-[72px] size-5" viewBox="0 0 20 20" fill="none" stroke="#fff" strokeWidth="2"><rect x="1" y="5" width="14" height="14" rx="2.500" /><path d="M5 1h9.500A4.500 4.500 0 0 1 19 5.500V15" /></svg>
        <svg className="-mt-[2px] ml-[72px] mr-[36px] size-5" viewBox="0 0 20 20" stroke="#fff" strokeWidth="2"><path d="M0 0l20 20M20 0 0 20" /></svg>
      </div>
    </div>
  );
}

function MenuRow() {
  const s = { fill: "none", stroke: "#fff", strokeWidth: 2 };
  return (
    <div className="flex h-[62px] items-center text-[24px] leading-none">
      <div className="ml-[30px] flex h-full w-[137px] flex-col justify-end font-semibold">
        <span className="mb-[11px] tracking-[-0.15px]">Home</span>
        <span className="mb-[2px] ml-[2px] h-[6px] w-[72px] bg-[#bda8e3]" />
      </div>
      <span className="w-[131px] tracking-[-0.3px]">Insert</span>
      <span className="w-[129px] tracking-[-0.1px]">Draw</span>
      <span className="w-[119px] tracking-[0.2px]">View</span>
      <span>Help</span>
      <svg className="ml-auto h-[30px] w-[34px]" viewBox="0 0 34 30" {...s}><path d="M17 24H8A7 7 0 0 1 6.500 10.500 10.500 10.500 0 0 1 26.500 8.500Q33 9.500 33 15" /><circle cx="25" cy="21" r="8.500" fill="#fff" stroke="none" /><path d="M20.500 21l3.500 3.500 5.500-6.500" stroke="#323130" /></svg>
      <svg className="ml-[38px] size-[31px]" viewBox="0 0 31 31" {...s}><path d="M1 27V1h29M6 6h24v16l-8 8H6zM30 21h-8v9" /></svg>
      <svg className="ml-[46px] h-[32px] w-[22px]" viewBox="0 0 22 32" {...s}><path d="M7 24v-5Q1 15 1 10.500a10 10 0 0 1 20 0Q21 15 15 19v5zM7 28h8M9 31.500h4" /></svg>
      <svg className="ml-[47px] h-[32px] w-[30px]" viewBox="0 0 30 32" {...s}><path d="M1 26h28l-4-6v-9a10 10 0 0 0-20 0v9zM11 27a4 4 0 0 0 8 0" /></svg>
      <svg className="ml-[41px] h-[31px] w-[30px]" viewBox="0 0 30 31" {...s}><path d="M6 11H1v19h25v-9M7 21q0-11 12-11V3l10 10-10 9v-6q-8 0-12 5z" /></svg>
      <span className="ml-[11px] w-[63px] tracking-[-0.4px]">Share</span>
      <svg className="ml-[46px] size-[30px]" viewBox="0 0 30 30" {...s}><path d="M2 28 28 2M19 1.500h9.500V11M1.500 19v9.500H11" /></svg>
      <span className="ml-[41px] mr-[21px] flex gap-[5px]"><i className="size-[7px] rounded-full bg-white" /><i className="size-[7px] rounded-full bg-white" /><i className="size-[7px] rounded-full bg-white" /></span>
    </div>
  );
}

function Divider({ className }) {
  return <span className={"h-16 w-[2px] shrink-0 bg-[#5f5d5b] " + className} />;
}

function Toolbar() {
  const s = { fill: "none", stroke: "#d2d0ce", strokeWidth: 2 };
  return (
    <div className="flex h-[80px] items-center text-[24px] leading-none [&>svg]:shrink-0">
      <svg className="ml-[34px] h-[36px] w-[34px]" viewBox="0 0 34 36" {...s} stroke="#a19f9d"><path d="M2 0v15h16M2 14Q10 1 21 2q12 2 12 13 0 6-5 10L15 35.500" /></svg>
      <svg className="ml-[47px] h-[36px] w-[34px]" viewBox="0 0 34 36" {...s} stroke="#a19f9d"><path d="M32 0v15H16M32 14Q24 1 13 2 1 4 1 15q0 6 5 10l13 10.500" /></svg>
      <svg className="ml-[48px] h-[36px] w-[30px]" viewBox="0 0 30 36" {...s}><path d="M7 5H1v30h28V5h-6M7 11V5h4q0-4 4-4t4 4h4v6z" /></svg>
      <Divider className="ml-[26px]" />
      <div className="ml-[19px] flex h-[52px] w-[334px] shrink-0 items-center border-2 border-[#201f1e] bg-[#3b3a39]">
        <span className="h-full w-[209px] border-r-2 border-[#201f1e] pl-[13px] pt-[13px] tracking-[-0.2px]">Calibri</span>
        <span className="pl-[14px] pt-px tracking-[-0.5px]">11</span>
      </div>
      <span className="-mt-[2px] ml-[36px] w-8 text-center font-['Noto_Sans'] text-[38px] font-bold text-[#d2d0ce]">B</span>
      <svg className="ml-[47px] h-[30px] w-8" viewBox="0 0 32 30" {...s}><path d="M13 2h12M7 28h12M19 2l-6 26" /></svg>
      <svg className="ml-[49px] mt-1 h-[36px] w-8" viewBox="0 0 32 36" {...s} strokeWidth="2.600"><path d="M7 1v17q0 10 9 10t9-10V1M4 34.500h24" /></svg>
      <svg className="ml-[44px] h-[40px] w-10" viewBox="0 0 40 40" {...s}><path d="M26 4q4-5 8 0L22 24l-9-4zM12 21l9 4" /><path d="M12 20l-6 8h10l5-4z" fill="#a19f9d" stroke="none" /><path d="M0 30h40v10H0z" fill="#ff0" stroke="none" /></svg>
      <svg className="ml-[62px] h-[40px] w-10" viewBox="0 0 40 40" {...s}><path d="M9.500 28 20 3l10.500 25M13 20h14" /><path d="M0 30h40v10H0z" fill="#000" stroke="none" /></svg>
      <svg className="ml-[64px] h-[32px] w-9" viewBox="0 0 36 32" {...s}><path d="M2 13l13-5 10 12-7 11z" fill="#fbe3b0" stroke="#f5c877" /><path d="M5 17l16 6-3 8z" fill="#e8932a" stroke="none" /><path d="M13 8l5-2 3 2 10-7 4 4-9 9 1 5-3 2z" fill="#323130" /></svg>
      <svg className="ml-[45px] h-[38px] w-9" viewBox="0 0 36 38" {...s}><path d="M1 28 11 2l8 22M5 20h13" /><path d="M15 30 28 17l8 7-12 13z" stroke="#d68be0" fill="#323130" /><path d="M15 30l5-5 9 7-5 5z" fill="#b13fc4" stroke="#d68be0" /></svg>
      <Chevron className="ml-[51px] h-3 w-5" w={2.4} />
      <Divider className="ml-[30px]" />
      <svg className="ml-[22px] h-[36px] w-9" viewBox="0 0 36 36"><path d="M0 0h5v6H0zM0 14h5v6H0zM0 28h5v6H0z" fill="#3a96dd" /><path d="M12 3h24M12 17h24M12 31h24" stroke="#d2d0ce" strokeWidth="2" /></svg>
      <div className="ml-[65px] flex w-[37px] shrink-0 gap-[5px]">
        <div className="-my-[6px] flex w-2 flex-col text-[13px] leading-[14px] text-[#3a96dd]"><span>1</span><span>2</span><span>3</span></div>
        <svg className="h-[32px] w-6" viewBox="0 0 24 32"><path d="M0 2h24M0 16h24M0 30h24" stroke="#d2d0ce" strokeWidth="2" /></svg>
      </div>
      <svg className="ml-[66px] h-[34px] w-9" viewBox="0 0 36 34" {...s} stroke="#8a8886"><path d="M0 1h36M20 9h16M20 17h16M20 25h16M0 33h36M17 17H1M8 10l-7 7 7 7" /></svg>
      <svg className="ml-[44px] h-[34px] w-9" viewBox="0 0 36 34" {...s}><path d="M0 1h36M20 9h16M20 17h16M20 25h16M0 33h36" /><path d="M0 17h15M8 10l7 7-7 7" stroke="#3a96dd" /></svg>
      <Chevron className="ml-[52px] h-3 w-5" w={2.4} />
      <Divider className="ml-[30px]" />
      <div className="ml-[8px] flex h-[76px] w-[140px] shrink-0 items-center border-2 border-[#252423] bg-[#3b3a39]">
        <svg className="ml-[30px] size-9" viewBox="0 0 36 36"><rect x="1" y="1" width="34" height="34" fill="#fafafa" stroke="#3a96b8" strokeWidth="2" /><path d="M7 17l7 8L30 11" fill="none" stroke="#d83b2f" strokeWidth="2.600" /></svg>
        <Chevron className="ml-[43px] h-3 w-[19px]" w={2.400} />
      </div>
      <Divider className="ml-[8px]" />
      <div className="ml-[9px] flex h-[68px] w-[347px] shrink-0 items-center border-2 border-[#252423] bg-[#3b3a39]">
        <span className="ml-[14px] flex h-14 w-[272px] items-center bg-white pl-[8px] pt-[2px] text-[36.500px] tracking-[0.1px] text-[#1e4e79]">Heading 1</span>
        <Chevron className="ml-[29px] h-3 w-[19px]" w={2.400} />
      </div>
      <Divider className="ml-[8px]" />
      <svg className="ml-[26px] h-[36px] w-[26px]" viewBox="0 0 26 36" {...s}><path d="M1 18v3q0 10 12 10t12-10v-3M13 31v4M8 35h10" /><rect x="4.500" y="1" width="17" height="26" rx="4" fill="#0063b1" stroke="#83beec" /></svg>
      <span className="ml-[24px] w-[131px] tracking-[0px]">Dictate</span>
      <Chevron className="h-3 w-5" w={2.400} />
    </div>
  );
}

const EMOJI = {
  crane: <g><path d="M2 23h25v4H1z" fill="#e8262b" /><path d="M4 0h6v25H4z" fill="#7b4a12" /><path d="M4 0h2v25H4zM9 0h2v25H9zM3 0h22v3H3z" fill="#ffb02e" /><path d="M6 6l3 4-3 4 3 4-3 4" stroke="#ffb02e" fill="none" /><path d="M18 3v5" stroke="#8d9aa5" strokeWidth="2" /><path d="M13 9h13l-2 5h-9z" fill="#f4511e" /><path d="M17 13l2.500-4 2.500 4z" fill="#ffb02e" /></g>,
  robot: <g><path d="M1 2h2v18H1zM23 2h2v18h-2z" fill="#f8312f" /><circle cx="2" cy="15" r="2.500" fill="#f8312f" /><circle cx="24" cy="15" r="2.500" fill="#f8312f" /><rect x="8" y="0" width="10" height="5" fill="#ffb02e" /><rect x="2.500" y="3" width="21" height="23" rx="6" fill="#d3c9de" /><rect x="4" y="7" width="18" height="8" rx="4" fill="#212121" /><rect x="7" y="8" width="3" height="6" rx="1.500" fill="#26c9fc" /><rect x="16" y="8" width="3" height="6" rx="1.500" fill="#26c9fc" /><rect x="9" y="19" width="8" height="3" rx="1.500" fill="#212121" /></g>,
  chart: <g><rect width="26" height="26" rx="4" fill="#e6d8ee" /><path d="M0 9h26M0 17h26M9 0v26M17 0v26" stroke="#cdbcd8" /><rect x="2" y="6" width="6" height="20" fill="#00d26a" /><rect x="10" y="14" width="6" height="12" fill="#f70a8d" /><rect x="18" y="4" width="6" height="22" fill="#00a6ed" /></g>,
  wave: <g><path d="M0 26V12A12 12 0 0 1 12 0q6 0 10 4-9 0-12 6-2 8 4 10 7 1 12-5v11z" fill="#00a6ed" /><path d="M9 13q0 8 8 8 6 0 8-5v3q-4 5-10 4-9-1-9-10 0-6 5-9-2 4-2 9z" fill="#52c8ff" /><path d="M10 8q1-5 6-5l2 2 3-1 2 3 2 1-2 1-3-1-2 2-2-2-2 2-2-1z" fill="#c9f1ff" /><circle cx="24.500" cy="7" r="1.300" fill="#c9f1ff" /><circle cx="24" cy="13" r="1.200" fill="#c9f1ff" /></g>,
  spring: <g fill="none" stroke="#f8312f" strokeWidth="2.600" strokeLinecap="round"><path d="M8 4q-3 3 0 6t0 6M13 1.500q-3 4 0 8t0 8M18.500 4q-3 3 0 6t0 6" /><path d="M3 11q-4 7 3 11 7 4 14 0 7-4 3-11" /></g>,
  gear: <g><circle cx="13" cy="13" r="7.500" fill="none" stroke="#a394b2" strokeWidth="5" /><circle cx="13" cy="13" r="11.500" fill="none" stroke="#b3a9bd" strokeWidth="4" strokeDasharray="4.500 4.530" strokeDashoffset="2.250" /></g>,
};

const SECTIONS = [
  { name: "Misc_", color: "#ff00c8" },
  { name: "Projects", color: "#c8a478", hover: true },
  { name: "Career", color: "#ffc213" },
  { name: "Archive", group: true },
  { name: "MECH2262", color: "#ffc213", sub: true },
  { name: "MECH2150", color: "#ee4f57", sub: true },
  { name: "Final Exam", color: "#00b4f0", sub: true },
  { name: "ENG3020", color: "#f7630c", sub: true },
  { name: "Stress", color: "#ff1a9c", sub: true, emoji: "crane" },
  { name: "MnC", color: "#31a3ff", sub: true, emoji: "robot" },
  { name: "ECE", color: "#b872d4", sub: true },
  { name: "BOMI", color: "#7fc400", sub: true },
  { name: "PM", color: "#00c853", sub: true, emoji: "chart" },
  { name: "FL", color: "#1fc3b4", sub: true, emoji: "wave" },
  { name: "CM", color: "#e6507f", sub: true, emoji: "robot", active: true },
  { name: "HT", color: "#829299", sub: true, emoji: "spring" },
  { name: "MD", color: "#0088f5", sub: true, emoji: "gear" },
];

function SectionRow({ name, color, sub, emoji, group, hover, active }) {
  return (
    <div className={"flex h-[72px] shrink-0 items-center " + (hover || active ? "bg-[#3b3a39]" : "")}>
      <span className={"h-full w-1 " + (active ? "bg-[#bda8e3]" : "")} />
      {group ? (
        <Chevron className="ml-[24px] mt-px h-[11px] w-[18px] text-white" w={2.8} />
      ) : (
        <svg className={"h-[52px] w-4 " + (sub ? "ml-[44px]" : "ml-[24px]")} viewBox="0 0 16 52">
          <path d="M16 0h-4v2q0 2-4 2Q0 4 0 12v28q0 8 8 8 4 0 4 2v2h4z" fill={color} />
        </svg>
      )}
      <span className={"flex items-center whitespace-nowrap pt-[2px] text-[24.4px] leading-none text-[#c8c6c4] " + (group ? "ml-[26px]" : "ml-[27px]")}>
        {emoji && <svg className="ml-[6px] mr-[4px] size-[27px] -translate-y-px" viewBox="0 0 27 27">{EMOJI[emoji]}</svg>}
        <span className="tracking-[-0.1px]">{name}</span>
      </span>
    </div>
  );
}

function AddButton({ label, className = "" }) {
  return (
    <div className={"flex h-[89px] shrink-0 items-center border-t-2 border-[#131211] pb-[5px] text-[#c0ace6] " + className}>
      <svg className="size-[34px]" viewBox="0 0 34 34" stroke="currentColor" strokeWidth="2"><path d="M17 0v34M0 17h34" /></svg>
      <span className="ml-[16px] whitespace-nowrap pt-[2px] text-[24px] font-semibold leading-none">{label}</span>
    </div>
  );
}

function SidePanel() {
  return (
    <div className="flex w-[742px] shrink-0 flex-col border-x-2 border-[#1b1a19] bg-[#252423] text-white">
      <div className="flex h-[88px] shrink-0 items-center border-b-2 border-[#121110] pt-[2px]">
        <svg className="ml-[21px] h-[36px] w-[36px]" viewBox="0 0 36 36"><path d="M0 0h22q2 0 2 2v28H0z" fill="#b872d4" /><path d="M25 5h4v5h-4zM25 13h4v5h-4z" fill="#b872d4" /><path d="M4 7h16v3H4z" fill="#252423" /><circle cx="26" cy="27" r="8" fill="#252423" stroke="#fff" strokeWidth="2.200" /><path d="M23 24l6 6M29 24l-6 6" stroke="#fff" strokeWidth="2" /></svg>
        <span className="ml-[11px] w-[179px] whitespace-nowrap text-[24px] font-semibold leading-none tracking-[0px]">My Notebook</span>
        <Chevron className="h-3 w-[18px]" w={2.600} />
        <svg className="ml-auto mr-[32px] h-[30px] w-[30px]" viewBox="0 0 30 30" fill="none" stroke="#e0dedc" strokeWidth="2"><path d="M5 0v28M0 23l5 5.500 5-5.500M10 4h20M10 11h15M10 17.500h10" /></svg>
      </div>
      <div className="flex grow">
        <div className="flex w-[388px] flex-col border-r-2 border-[#121110]">
          {SECTIONS.map((s) => <SectionRow key={s.name} {...s} />)}
          <AddButton label="Add section" className="mt-auto pl-5" />
        </div>
        <div className="flex grow flex-col">
          <div className="flex h-[72px] items-center border-l-4 border-[#bda8e3] bg-[#3b3a39] pb-[3px] pl-[36px] text-[24.3px] leading-none text-[#c8c6c4]">Untitled page</div>
          <AddButton label="Add page" className="mt-auto pl-[20px]" />
        </div>
      </div>
    </div>
  );
}

function Rail() {
  return (
    <div className="flex w-[94px] shrink-0 flex-col bg-[#323130]">
      <div className="flex h-[88px] items-center border-l-[6px] border-[#bda8e3] bg-[#484644] pl-6">
        <svg className="h-[33px] w-[38px]" viewBox="0 0 38 33" fill="#bda8e3"><path d="M0 0h8.500v33H0zM10 0h8.500v33H10zM20 1.500l7-1.500 11 31-7 2z" /></svg>
      </div>
      <div className="flex h-[88px] items-center pl-[30px]">
        <svg className="size-[36px]" viewBox="0 0 36 36" fill="none" stroke="#c8c6c4" strokeWidth="2"><circle cx="22" cy="13" r="11.500" /><path d="M14 21 1 35" /></svg>
      </div>
      <div className="flex h-[88px] items-center pl-[30px]">
        <svg className="size-[36px]" viewBox="0 0 36 36" fill="none" stroke="#c8c6c4" strokeWidth="2.200"><circle cx="18" cy="18" r="16.800" /><path d="M17.500 8v11.500H26" /></svg>
      </div>
    </div>
  );
}

/* Free-form ink page: strokes and labels keep the place where they were written. */
const SKETCH_TOP = [
  [3.2, "M170 195 212 197M216 168 217 224M232 168 234 220M158 578 190 578M191 512 199 623M230 503Q218 560 230 623M242 565 240 580M132 881 168 881M181 813C170 880 175 940 172 983M209 822 206 974M103 1184 138 1186M400 327 448 327M405 353 452 353M445 303Q420 340 404 388M416 838 411 955"],
  [3.8, "M240 193Q310 186 380 195L414 204Q424 215 422 250L428 320M427 366 430 430 428 480 425 570M236 840C200 890 150 940 142 976M163 1103C150 1160 155 1220 153 1280M184 1108C175 1160 180 1220 174 1265"],
  [4.4, "M234 562Q280 570 320 558 350 570 370 562 400 550 425 550L456 544M515 499C480 505 462 545 460 580 462 620 478 632 492 626 525 620 542 590 541 530 538 500 525 495 505 500 485 505 475 525 470 548M543 558Q590 565 635 548"],
  [4.8, "M978 345C990 300 990 215 1035 212 1080 212 1070 330 1082 400 1090 450 1100 470 1108 469 1150 440 1140 215 1193 211 1240 215 1200 400 1230 456 1260 440 1255 250 1305 247 1350 255 1325 410 1345 445Q1360 475 1378 436M990 466C990 400 1000 340 1035 338 1080 345 1065 400 1068 470 1070 540 1075 592 1093 592 1130 590 1120 500 1135 460 1145 390 1150 360 1172 362 1195 370 1183 440 1190 500 1195 540 1205 568 1222 568 1250 560 1255 370 1296 358 1325 370 1315 440 1318 490 1325 530 1335 540 1339 560M990 460Q1020 466 1100 463L1320 465Q1400 473 1460 481 1475 482 1488 470"],
  [4.5, "M218 883Q240 892 290 890 350 886 408 904M409 810 523 820 538 940Q525 965 500 962 440 945 412 957M538 888Q555 865 580 864 610 866 630 857M632 803Q670 815 716 818M632 828 631 962M637 820 716 958M714 808 722 960M714 822 632 945M632 944 722 958M725 873 785 876 798 868M850 822C810 825 797 860 799 900 805 940 825 948 845 942 880 925 892 890 888 850 880 820 855 820 840 828Q825 840 820 868M768 880 763 1000Q753 1050 757 1100L765 1190Q765 1214 750 1213 715 1212 705 1203 680 1192 640 1192 570 1178 530 1180L450 1183Q400 1188 300 1180 270 1166 220 1170L180 1172"],
  [4.6, "M1018 1046C1000 1060 998 1110 1012 1140 1030 1150 1040 1100 1032 1070Q1028 1050 1018 1046M1020 1046 1180 1057 1360 1060 1384 1066C1395 1100 1396 1150 1375 1176M1012 1145Q1060 1148 1130 1146 1220 1165 1372 1174M1365 1060 1373 880M1380 1060 1387 880M1377 880Q1378 855 1386 857 1394 860 1387 885"],
];

const SKETCH_BOTTOM = [
  [2.8, "M262 242 345 244M357 192Q347 240 349 306M396 196 392 316M244 650 290 652M252 911 296 911M306 880V974M220 1183Q240 1184 258 1189M1054 148 1036 218M1032 192 1038 220 1052 203 1075 192M855 1184H893M740 268 850 280 905 280Q940 285 960 290M350 656 410 661"],
  [3.6, "M400 242 548 252Q600 265 620 263L652 262M670 200 668 312 738 218 727 316M680 308 740 218M305 598 294 724M348 603 345 716M410 661 440 664 620 655 880 628 960 618M349 893 345 960M358 925Q400 920 440 928 520 940 610 940L890 947M268 1148Q257 1180 267 1213M308 1148Q298 1190 300 1236M312 1191Q380 1197 480 1196L520 1190 585 1189M580 1128V1224M648 1130 647 1214M652 1177 750 1178 796 1181M802 1230 804 1150 850 1236M851 1142V1238M480 1185 478 1290 474 1334 572 1337M578 1295 577 1394M645 1295V1385M650 1338 748 1338 746 1250 754 1180"],
  [4.2, "M657 195 660 260 668 312M1010 243C975 260 960 280 962 305 970 340 1000 342 1020 341 1045 325 1070 310 1069 285 1068 250 1040 238 1010 243M970 590Q1010 562 1035 566C1060 580 1068 620 1058 650 1030 675 1000 675 980 665 965 640 962 600 985 575M948 918Q965 890 1005 897 1028 900 1022 950C1010 1000 990 1018 955 1017 915 1010 905 970 912 930 925 900 960 890 980 892"],
  [3.6, "M965 1257C920 1255 893 1200 897 1165 905 1130 935 1090 960 1092Q975 1092 988 1096M947 1115Q980 1100 1010 1108C1045 1130 1045 1170 1035 1210 1020 1250 990 1258 965 1257"],
];

/* text, x, baseline, width, size, tilt */
const LABELS = [
  ["mac_on", 944, 1463, 78, 25, -7],
  ["Stop", 1085, 1480, 38, 21, 0],
  ["switch1", 954, 1512, 75, 27, -2],
  ["mac_on", 1091, 1514, 83, 26, 0],
  ["mac_on", 957, 1623, 76, 22, 0],
  ["timer", 1067, 1625, 54, 27, 0],
  ["30s", 1072, 1667, 40, 35, 0],
  ["fan-on", 1248, 1627, 87, 31, 0],
  ["mac_on", 951, 1724, 64, 28, -2],
  ["P", 1025, 1947, 13, 28, 0],
  ["A", 1125, 1950, 19, 34, 0],
  ["Process", 1230, 1929, 66, 25, -2],
  ["PF", 1226, 1998, 24, 22, 0],
  ["A", 1001, 2102, 18, 33, 0],
  ["D", 1231, 2133, 18, 37, 0],
  ["A", 1001, 2210, 21, 35, 0],
  ["IF", 1210, 2259, 26, 34, 0],
  ["P", 991, 2305, 14, 27, 0],
  ["F", 1099, 2305, 18, 31, 0],
  ["R", 1168, 2307, 17, 32, 0],
  ["A", 1210, 2346, 26, 51, 0],
  ["OA", 1090, 2446, 37, 39, 0],
];

function NotePage() {
  return (
    <div className="relative grow overflow-hidden bg-white">
      <div className="ml-[59px] mt-[89px] w-[479px] border-t-2 border-[#8a8a8a] pl-[20px] pt-[4px] text-[19px] leading-[26px] text-[#767676]">
        <span className="inline-block w-[204px] tracking-[0.2px]">October 20, 2022</span>
        <span className="tracking-[0.2px]">3:59 PM</span>
      </div>
      <svg className="absolute left-0 top-0 h-[1518px] w-[1900px]" viewBox="836 1290 1900 1518" fill="none" stroke="#00a0db" strokeLinecap="round" strokeLinejoin="round">
        <g transform="translate(880 1360) scale(.446429 .333333)">
          {SKETCH_TOP.map(([w, d], i) => <path key={i} d={d} strokeWidth={w} vectorEffect="non-scaling-stroke" />)}
        </g>
        <g transform="translate(900 1880) scale(.333333 .382653)">
          {SKETCH_BOTTOM.map(([w, d], i) => <path key={i} d={d} strokeWidth={w} vectorEffect="non-scaling-stroke" />)}
          <path d="M634 214V290" stroke="#111" strokeWidth="1" vectorEffect="non-scaling-stroke" />
        </g>
        {LABELS.map(([t, x, y, w, size, tilt], i) => (
          <text key={i} transform={`translate(${x} ${y}) rotate(${tilt})`} textLength={w} lengthAdjust="spacingAndGlyphs" fontSize={size} fontFamily="Lato" fontWeight="400" fill="#00a0db" strokeWidth={t.length > 2 ? 0.5 : 1}>{t}</text>
        ))}
      </svg>
      <div className="absolute inset-x-0 top-0 h-3 bg-gradient-to-b from-black/45 to-transparent" />
    </div>
  );
}

function TimerWidget() {
  return (
    <div className="absolute bottom-0 left-[194px] flex h-36 w-[200px] flex-col items-center overflow-hidden bg-[#66788f] pt-4 font-['Liberation_Sans'] text-white">
      <div className="flex h-[76px] w-[140px] shrink-0 items-center justify-center bg-[#21545b] pr-[2px] text-[56px] font-bold leading-none tracking-[-0.500px]">4:21</div>
      <div className="mt-3 h-[46px] w-[140px] shrink-0 whitespace-nowrap bg-[#21545b] pt-[4px] text-center text-[32px] leading-[36px]">06:37 PM</div>
    </div>
  );
}

function OneNote() {
  return (
    <div className="flex h-[1728px] flex-col bg-[#323130] text-white">
      <TitleBar />
      <MenuRow />
      <Toolbar />
      <div className="h-[2px] bg-[#1a1919]" />
      <div className="relative flex h-[1518px]">
        <Rail />
        <SidePanel />
        <NotePage />
        <div className="absolute left-0 top-0 h-3 w-[836px] bg-gradient-to-b from-black/30 to-transparent" />
        <TimerWidget />
      </div>
    </div>
  );
}

export default function App() {
  return (
    <div className="h-[2904px] w-[2736px] overflow-hidden bg-black font-['Noto_Sans','Open_Sans',sans-serif]">
      <div className="ml-[415px] h-[1080px] w-[1920px] overflow-hidden">
        <Browser />
        <SecondTaskbar />
      </div>
      <OneNote />
      <MainTaskbar />
    </div>
  );
}
